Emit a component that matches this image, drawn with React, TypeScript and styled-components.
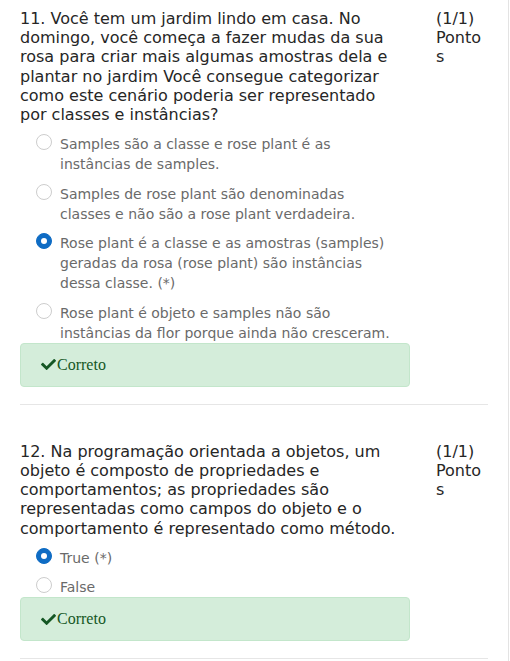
import styled, { createGlobalStyle } from 'styled-components';
import { FaCheck } from 'react-icons/fa';

interface Choice {
  label: string;
  checked?: boolean;
}

interface QuestionInfo {
  number: number;
  title: string;
  score: string;
  choices: Choice[];
}

const questions: QuestionInfo[] = [
  {
    number: 11,
    title:
      'Você tem um jardim lindo em casa. No domingo, você começa a fazer mudas da sua rosa para criar mais algumas amostras dela e plantar no jardim Você consegue categorizar como este cenário poderia ser representado por classes e instâncias?',
    score: '(1/1)',
    choices: [
      { label: 'Samples são a classe e rose plant é as instâncias de samples.' },
      { label: 'Samples de rose plant são denominadas classes e não são a rose plant verdadeira.' },
      {
        label: 'Rose plant é a classe e as amostras (samples) geradas da rosa (rose plant) são instâncias dessa classe. (*)',
        checked: true,
      },
      { label: 'Rose plant é objeto e samples não são instâncias da flor porque ainda não cresceram.' },
    ],
  },
  {
    number: 12,
    title:
      'Na programação orientada a objetos, um objeto é composto de propriedades e comportamentos; as propriedades são representadas como campos do objeto e o comportamento é representado como método.',
    score: '(1/1)',
    choices: [{ label: 'True (*)', checked: true }, { label: 'False' }],
  },
];

const App = () => {
  return (
    <>
      <GlobalStyle />
      <Page>
        {questions.map((q) => (
          <Question key={q.number}>
            <Header>
              <Title>{`${q.number}. ${q.title}`}</Title>
              <Points>
                <Score>{q.score}</Score>
                <Unit>Pontos</Unit>
              </Points>
            </Header>
            <Choices>
              {q.choices.map((c) => (
                <ChoiceRow key={c.label}>
                  <Radio checked={!!c.checked} />
                  <ChoiceLabel>{c.label}</ChoiceLabel>
                </ChoiceRow>
              ))}
            </Choices>
            <Feedback>
              <FaCheck size={15} />
              Correto
            </Feedback>
          </Question>
        ))}
      </Page>
    </>
  );
};

export default App;

const GlobalStyle = createGlobalStyle`
  html, body {
    margin: 0;
    padding: 0;
    background: #fff;
  }
`;

const Page = styled.main`
  width: 509px;
  height: 661px;
  overflow: hidden;
  box-sizing: border-box;
  border-right: 1px solid #e3e3e3;
  padding-top: 9px;
  font-family: 'DejaVu Sans', Verdana, sans-serif;
`;

const Question = styled.section`
  margin: 0 20px 37px;
  padding-bottom: 17px;
  border-bottom: 1px solid #e6e6e6;
`;

const Header = styled.div`
  display: flex;
  gap: 36px;
`;

const Title = styled.div`
  flex: 1;
  font-size: 16px;
  line-height: 19.2px;
  color: #262626;
`;

const Points = styled.div`
  width: 52px;
  font-size: 16px;
  line-height: 19.2px;
  color: #262626;
  word-break: break-all;
`;

const Score = styled.div``;

const Unit = styled.div``;

const Choices = styled.ul`
  list-style: none;
  width: 390px;
  box-sizing: border-box;
  margin: 10px 0 0;
  padding: 0 16px;
  display: flex;
  flex-direction: column;
  gap: 9.5px;
`;

const ChoiceRow = styled.li`
  display: flex;
  align-items: flex-start;
  gap: 8px;
`;

const Radio = styled.span<{ checked: boolean }>`
  flex: none;
  position: relative;
  width: 16px;
  height: 16px;
  border-radius: 50%;
  box-sizing: border-box;
  border: 1px solid ${(props) => (props.checked ? '#0f6cc4' : '#cdcdcd')};
  background: ${(props) => (props.checked ? '#0f6cc4' : '#fff')};

  &::after {
    content: '';
    display: ${(props) => (props.checked ? 'block' : 'none')};
    position: absolute;
    left: 50%;
    top: 50%;
    width: 6px;
    height: 6px;
    margin: -3px 0 0 -3px;
    border-radius: 50%;
    background: #fff;
  }
`;

const ChoiceLabel = styled.span`
  flex: 1;
  font-size: 14px;
  line-height: 20px;
  color: #6a6a6a;
`;

const Feedback = styled.div`
  width: 390px;
  box-sizing: border-box;
  display: flex;
  align-items: center;
  padding: 11px 20px;
  border: 1px solid #c3e6cb;
  border-radius: 4px;
  background: #d4edda;
  color: #155724;
  font-family: 'Liberation Serif', 'Times New Roman', serif;
  font-size: 16px;
  line-height: 20px;

  svg {
    margin-right: 1px;
  }
`;
